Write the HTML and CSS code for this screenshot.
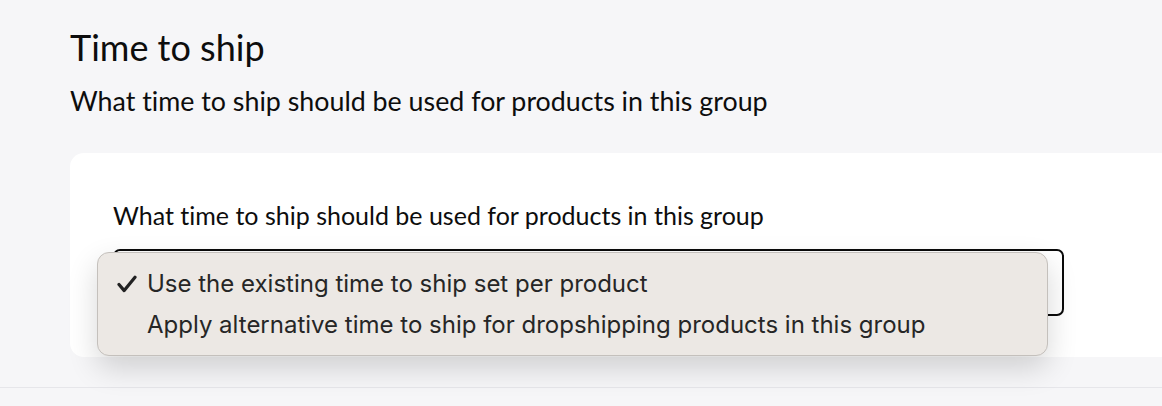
FILE: index.html
```html
<!DOCTYPE html>
<html lang="en">
<head>
<meta charset="utf-8">
<title>Time to ship</title>
<link rel="stylesheet" href="styles.css">
</head>
<body>
<main class="page">
  <h1 class="title">Time to ship</h1>
  <p class="subtitle">What time to ship should be used for products in this group</p>
  <section class="card">
    <label class="field-label">What time to ship should be used for products in this group</label>
    <div class="select-wrap">
      <div class="select"></div>
      <ul class="menu">
        <li class="option selected"><span class="check"><svg width="20" height="18" viewBox="0 0 20 18"><path d="M2 9.5 L7.2 15.6 L18 2.2" fill="none" stroke="#222" stroke-width="3.2" stroke-linecap="round" stroke-linejoin="round"/></svg></span>Use the existing time to ship set per product</li>
        <li class="option"><span class="check"></span>Apply alternative time to ship for dropshipping products in this group</li>
      </ul>
    </div>
  </section>
</main>
<div class="divider"></div>
</body>
</html>
```
FILE: styles.css
```css
html, body {
  margin: 0;
  padding: 0;
  background: #f6f6f8;
  overflow: hidden;
}
body {
  width: 1162px;
  height: 406px;
  font-family: "Lato", "Liberation Sans", sans-serif;
  font-variant-ligatures: none;
  color: #0d0d0d;
}
.page {
  padding: 25px 0 0 70px;
}
.title {
  margin: 0;
  font-size: 36px;
  font-weight: 400;
  line-height: 44px;
}
.subtitle {
  margin: 16px 0 0;
  font-size: 26.8px;
  line-height: 32px;
}
.card {
  margin-top: 36px;
  width: 1150px;
  background: #fff;
  border-radius: 14px 0 0 14px;
  padding: 47px 0 41px 43px;
  box-sizing: border-box;
}
.field-label {
  display: block;
  font-size: 25px;
  line-height: 30px;
}
.select-wrap {
  position: relative;
  margin-top: 19px;
}
.select {
  width: 951px;
  height: 67px;
  box-sizing: border-box;
  border: 2px solid #0a0a0a;
  border-radius: 7px;
  background: #fff;
}
.menu {
  position: absolute;
  left: -16px;
  top: 3px;
  width: 951px;
  height: 104px;
  box-sizing: border-box;
  margin: 0;
  padding: 10px 0 0;
  list-style: none;
  background: #ece8e4;
  border: 1px solid #c4c0bc;
  border-radius: 12px;
  box-shadow: 0 12px 30px rgba(0, 0, 0, 0.16);
  font-family: "Inter", "Noto Sans", sans-serif;
  font-size: 24px;
  color: #262626;
}
.option {
  display: flex;
  align-items: center;
  height: 41px;
  padding-left: 19px;
}
.check {
  width: 30px;
  flex: none;
  display: flex;
  align-items: center;
}
.divider {
  margin-top: 30px;
  border-top: 1px solid #e6e6ea;
}
```
